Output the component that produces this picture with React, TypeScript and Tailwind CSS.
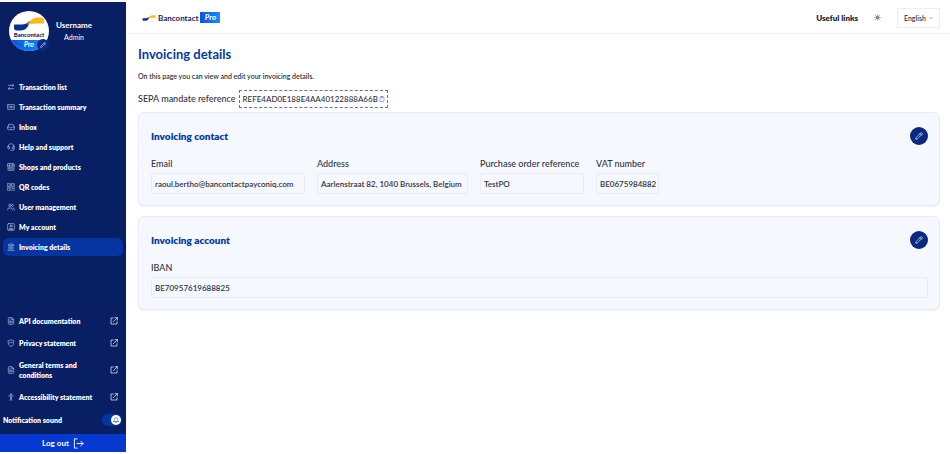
import React, { useState } from 'react';
import {
  ArrowRightLeft,
  ChevronDown,
  Clipboard,
  FileText,
  Headset,
  Inbox,
  Landmark,
  Pencil,
  Users,
} from 'lucide-react';

interface IconProps {
  className?: string;
}

interface NavItem {
  label: string;
  icon: React.ComponentType<IconProps>;
}

function LineIcon({ className, children }: IconProps & { children: React.ReactNode }) {
  return (
    <svg
      viewBox="0 0 24 24"
      className={className}
      fill="none"
      stroke="currentColor"
      strokeWidth="2"
      strokeLinecap="round"
      strokeLinejoin="round"
      aria-hidden="true"
    >
      {children}
    </svg>
  );
}

function SummaryIcon({ className }: IconProps) {
  return (
    <LineIcon className={className}>
      <rect x="1" y="5" width="22" height="14" rx="2" />
      <path d="M6 9v6M18 9v6" />
      <circle cx="12" cy="12" r="2" />
    </LineIcon>
  );
}

function ShopIcon({ className }: IconProps) {
  return (
    <LineIcon className={className}>
      <path d="M3 2h18l1 7H2z" />
      <path d="M3 9v13h18V9M8 2v7M16 2v7M7 14h10v4H7z" />
    </LineIcon>
  );
}

function QrIcon({ className }: IconProps) {
  return (
    <LineIcon className={className}>
      <path d="M2 2h8v8H2zM14 2h8v8h-8zM2 14h8v8H2zM14 14h3v3h5M22 14v1M14 22v-1M18 22h4v-1" />
      <path d="M6 6h.01M18 6h.01M6 18h.01" />
    </LineIcon>
  );
}

function AccountIcon({ className }: IconProps) {
  return (
    <LineIcon className={className}>
      <rect x="2" y="2" width="20" height="20" rx="2" />
      <circle cx="12" cy="9" r="3" />
      <path d="M6 18c1-4 11-4 12 0z" />
    </LineIcon>
  );
}

function ShieldIcon({ className }: IconProps) {
  return (
    <LineIcon className={className}>
      <path d="M4 5c3 0 5-1 8-3 3 2 5 3 8 3v8c0 5-4 8-8 9-4-1-8-4-8-9z" />
      <path d="M8 11h8" />
    </LineIcon>
  );
}

function PersonIcon({ className }: IconProps) {
  return (
    <LineIcon className={className}>
      <circle cx="12" cy="4" r="2" />
      <path d="M5 9h14M12 9v6M12 14l-3 8M12 14l3 8" />
    </LineIcon>
  );
}

// Square frame that stays open at its top right corner, with the arrow leaving it
function ExternalIcon({ className }: IconProps) {
  return (
    <LineIcon className={className}>
      <path d="M10 3H3v18h18v-7" />
      <path d="M15 2h7v7M22 2L10 14" />
    </LineIcon>
  );
}

function BellIcon({ className }: IconProps) {
  return (
    <LineIcon className={className}>
      <path d="M5 18V10a7 7 0 0 1 14 0v8M2 18h20M10 22h4" />
    </LineIcon>
  );
}

function LogOutIcon({ className }: IconProps) {
  return (
    <LineIcon className={className}>
      <path d="M9 2H3v20h6" />
      <path d="M9 12h13M17 7l5 5-5 5" />
    </LineIcon>
  );
}

function ThemeIcon({ className }: IconProps) {
  return (
    <LineIcon className={className}>
      <circle cx="12" cy="12" r="6" fill="currentColor" />
      <path d="M12 1v2M12 21v2M1 12h2M21 12h2M4 4l2 2M18 18l2 2M4 20l2-2M18 6l2-2" />
    </LineIcon>
  );
}

const navItems: NavItem[] = [
  { label: 'Transaction list', icon: ArrowRightLeft },
  { label: 'Transaction summary', icon: SummaryIcon },
  { label: 'Inbox', icon: Inbox },
  { label: 'Help and support', icon: Headset },
  { label: 'Shops and products', icon: ShopIcon },
  { label: 'QR codes', icon: QrIcon },
  { label: 'User management', icon: Users },
  { label: 'My account', icon: AccountIcon },
  { label: 'Invoicing details', icon: Landmark },
];

const externalLinks: NavItem[] = [
  { label: 'API documentation', icon: FileText },
  { label: 'Privacy statement', icon: ShieldIcon },
  { label: 'General terms and conditions', icon: FileText },
  { label: 'Accessibility statement', icon: PersonIcon },
];

// Blue and yellow wave of the Bancontact mark
function BancontactWave({ className }: IconProps) {
  return (
    <svg viewBox="0 0 60 28" className={className} aria-hidden="true">
      <path d="M0 15h15c8 0 12-3 17-8-2 12-8 20-19 20H5c-3 0-5-2-5-5z" fill="#0a2f8f" />
      <path d="M60 13H45c-8 0-12 2-19 2C33 8 37 1 47 1h8c3 0 5 2 5 5z" fill="#fbb91a" />
    </svg>
  );
}

function Avatar() {
  return (
    <div className="relative h-10 w-10 shrink-0">
      <div className="flex h-10 w-10 flex-col items-center overflow-hidden rounded-full bg-white">
        <BancontactWave className="mt-1.5 h-3.5 w-[30px]" />
        <span className="text-[6px] leading-[8px] font-black text-[#14245c]">Bancontact</span>
        <span className="mt-px w-full flex-1 bg-gradient-to-r from-[#0a55dc] to-[#1a8cff] text-center text-[7px] leading-[9px] font-bold text-white italic">
          Pro
        </span>
      </div>
      <button
        type="button"
        aria-label="Edit profile"
        className="absolute right-0 bottom-0 flex h-3 w-3 items-center justify-center rounded-full bg-[#082a83] text-white"
      >
        <Pencil className="h-1.5 w-1.5" />
      </button>
    </div>
  );
}

function Sidebar() {
  const [sound, setSound] = useState(true);

  return (
    <aside className="flex w-[126px] shrink-0 flex-col bg-[#091f63] text-white">
      <div className="flex gap-[7px] pt-[9px] pl-[9px]">
        <Avatar />
        <div className="pt-2 text-center">
          <p className="text-[8px] leading-3 font-bold">Username</p>
          <p className="text-[7px] leading-3">Admin</p>
        </div>
      </div>

      <nav className="mt-[26px] px-[3px]">
        <ul>
          {navItems.map(({ label, icon: Icon }) => {
            const active = label === 'Invoicing details';
            return (
              <li key={label} className="py-px">
                <a
                  href="#"
                  aria-current={active ? 'page' : undefined}
                  className={`flex h-[18px] items-center gap-1 rounded-md px-1 text-[7px] font-extrabold ${
                    active ? 'bg-[#0535a0]' : ''
                  }`}
                >
                  <Icon className="h-2 w-2 text-[#b5c0e0]" />
                  {label}
                </a>
              </li>
            );
          })}
        </ul>
      </nav>

      <div className="mt-auto">
        <ul className="flex flex-col gap-3">
          {externalLinks.map(({ label, icon: Icon }) => (
            <li key={label}>
              <a href="#" className="flex items-center gap-1 pr-2 pl-[7px] text-[7px] leading-[10px] font-extrabold">
                <Icon className="h-2 w-2 shrink-0 text-[#b5c0e0]" />
                <span className="w-20">{label}</span>
                <ExternalIcon className="ml-auto h-2 w-2 shrink-0" />
              </a>
            </li>
          ))}
        </ul>

        <label className="mt-3 flex h-3 items-center justify-between pr-1 pl-[3px] text-[7px] font-extrabold">
          Notification sound
          <span className="flex h-3 w-5 items-center justify-end rounded-full bg-[#0535a0] px-px">
            <input
              type="checkbox"
              role="switch"
              className="sr-only"
              checked={sound}
              onChange={(e) => setSound(e.target.checked)}
            />
            <span className={`flex h-2.5 w-2.5 items-center justify-center rounded-full bg-white ${sound ? '' : 'mr-auto'}`}>
              <BellIcon className="h-1.5 w-1.5 text-[#0535a0]" />
            </span>
          </span>
        </label>

        <button
          type="button"
          className="mt-2 flex h-[18px] w-full items-center justify-center gap-1 bg-[#0738cf] text-[8px] font-bold"
        >
          Log out
          <LogOutIcon className="h-[11px] w-[11px]" />
        </button>
      </div>
    </aside>
  );
}

function TopBar() {
  return (
    <header className="flex h-8 items-center border-b border-[#eef0f4] pr-2.5 pl-4">
      <a href="#" className="flex items-center gap-0.5 text-[8px] font-bold text-[#14245c]">
        <BancontactWave className="h-1.5 w-3.5" />
        <span>Bancontact</span>
        <span className="h-[11px] w-5 bg-gradient-to-r from-[#0a55dc] to-[#1a8cff] text-center leading-[11px] text-white italic">
          Pro
        </span>
      </a>
      <a href="#" className="ml-auto text-[8px] font-extrabold text-[#26282e]">
        Useful links
      </a>
      <button type="button" aria-label="Toggle theme" className="mx-4 text-[#888888]">
        <ThemeIcon className="h-[7px] w-[7px]" />
      </button>
      <div className="relative flex items-center">
        <select
          aria-label="Language"
          className="h-5 w-[43px] appearance-none border border-[#eceef2] bg-white pl-1.5 text-[7px] leading-[18px] font-medium text-[#26282e]"
        >
          <option>English</option>
        </select>
        <ChevronDown className="pointer-events-none absolute right-1.5 h-1.5 w-1.5 text-[#666666]" />
      </div>
    </header>
  );
}

interface FieldProps {
  id: string;
  label: string;
  value: string;
  className: string;
}

function Field({ id, label, value, className }: FieldProps) {
  return (
    <div className={`flex flex-col gap-0.5 ${className}`}>
      <label htmlFor={id} className="text-[9px] leading-[14px] font-medium whitespace-nowrap">
        {label}
      </label>
      <input
        id={id}
        readOnly
        value={value}
        className="h-[21px] w-full rounded-xs border border-[#e8ecf4] bg-transparent pl-[3px] text-[8px] font-semibold"
      />
    </div>
  );
}

function Card({ title, children }: { title: string; children: React.ReactNode }) {
  return (
    <section className="rounded-md border border-[#e8ecf4] bg-[#f5f8fe] pt-3.5 pr-[11px] pb-[11px] pl-3 shadow-xs">
      <div className="flex h-[18px] items-center justify-between">
        <h2 className="text-[10px] leading-4 font-extrabold text-[#063a9e]">{title}</h2>
        <button
          type="button"
          aria-label={`Edit ${title}`}
          className="flex h-[18px] w-[18px] items-center justify-center rounded-full bg-[#082a83] text-white"
        >
          <Pencil className="h-2 w-2" />
        </button>
      </div>
      <div className="mt-3 flex flex-wrap gap-3">{children}</div>
    </section>
  );
}

export default function App() {
  return (
    <div className="flex min-h-screen bg-white py-0.5 font-['Lato',sans-serif] text-[#30333d]">
      <Sidebar />
      <div className="min-w-0 flex-1">
        <TopBar />
        <main className="pr-2.5 pl-3">
          <h1 className="pt-3 text-[13px] leading-4 font-bold text-[#063a9e]">Invoicing details</h1>
          <p className="mt-2 text-[7px] leading-3 font-semibold">
            On this page you can view and edit your invoicing details.
          </p>
          <div className="mt-2 flex items-center gap-1 text-[9px] font-medium">
            <span>SEPA mandate reference</span>
            <button
              type="button"
              className="flex h-[18px] items-center gap-px border border-dashed border-[#5b74b8] px-0.5 text-[8px] font-medium"
            >
              REFE4AD0E188E4AA40122888A66B
              <Clipboard className="h-1.5 w-1.5 text-[#3a58a8]" />
            </button>
          </div>

          <div className="mt-1 flex flex-col gap-2.5">
            <Card title="Invoicing contact">
              <Field id="email" label="Email" value="raoul.bertho@bancontactpayconiq.com" className="w-[154px]" />
              <Field id="address" label="Address" value="Aarlenstraat 82, 1040 Brussels, Belgium" className="w-[151px]" />
              <Field id="purchase-order" label="Purchase order reference" value="TestPO" className="w-[104px]" />
              <Field id="vat" label="VAT number" value="BE0675984882" className="w-[63px]" />
            </Card>
            <Card title="Invoicing account">
              <Field id="iban" label="IBAN" value="BE70957619688825" className="w-full" />
            </Card>
          </div>
        </main>
      </div>
    </div>
  );
}
